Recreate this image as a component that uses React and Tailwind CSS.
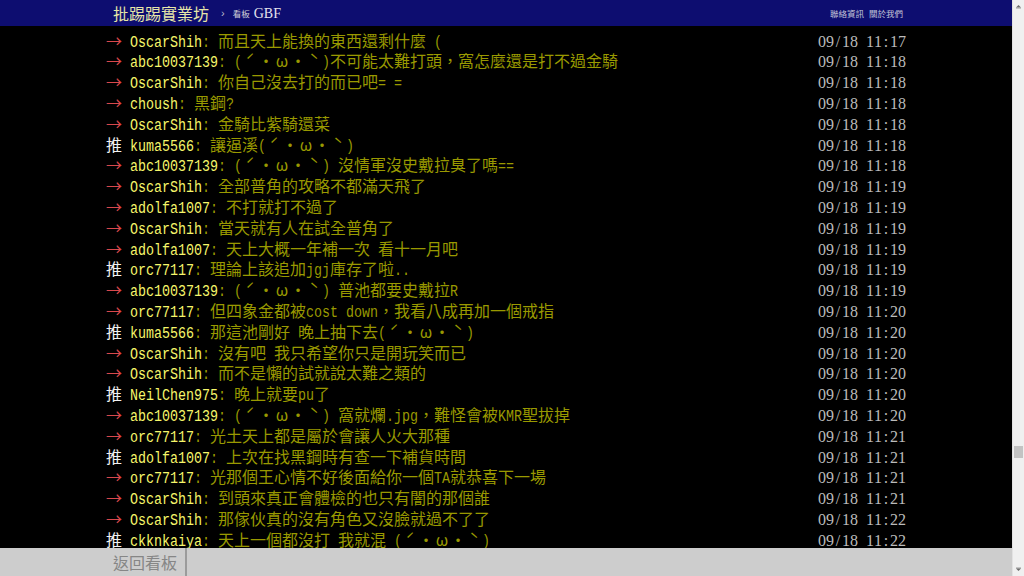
const CJK = "font-['Noto_Sans_CJK_TC','Noto_Sans_CJK_JP',sans-serif]";

const rows = [
  ["→", "OscarShih", "而且天上能換的東西還剩什麼 (", "09/18 11:17"],
  ["→", "abc10037139", "(ˊ・ω・ˋ)不可能太難打頭，窩怎麼還是打不過金騎", "09/18 11:18"],
  ["→", "OscarShih", "你自己沒去打的而已吧= =", "09/18 11:18"],
  ["→", "choush", "黑鋼?", "09/18 11:18"],
  ["→", "OscarShih", "金騎比紫騎還菜", "09/18 11:18"],
  ["推", "kuma5566", "讓逼溪(ˊ・ω・ˋ)", "09/18 11:18"],
  ["→", "abc10037139", "(ˊ・ω・ˋ) 沒情軍沒史戴拉臭了嗎==", "09/18 11:18"],
  ["→", "OscarShih", "全部普角的攻略不都滿天飛了", "09/18 11:19"],
  ["→", "adolfa1007", "不打就打不過了", "09/18 11:19"],
  ["→", "OscarShih", "當天就有人在試全普角了", "09/18 11:19"],
  ["→", "adolfa1007", "天上大概一年補一次 看十一月吧", "09/18 11:19"],
  ["推", "orc77117", "理論上該追加jgj庫存了啦..", "09/18 11:19"],
  ["→", "abc10037139", "(ˊ・ω・ˋ) 普池都要史戴拉R", "09/18 11:19"],
  ["→", "orc77117", "但四象金都被cost down，我看八成再加一個戒指", "09/18 11:20"],
  ["推", "kuma5566", "那這池剛好 晚上抽下去(ˊ・ω・ˋ)", "09/18 11:20"],
  ["→", "OscarShih", "沒有吧 我只希望你只是開玩笑而已", "09/18 11:20"],
  ["→", "OscarShih", "而不是懶的試就說太難之類的", "09/18 11:20"],
  ["推", "NeilChen975", "晚上就要pu了", "09/18 11:20"],
  ["→", "abc10037139", "(ˊ・ω・ˋ) 窩就爛.jpg，難怪會被KMR聖拔掉", "09/18 11:20"],
  ["→", "orc77117", "光土天上都是屬於會讓人火大那種", "09/18 11:21"],
  ["推", "adolfa1007", "上次在找黑鋼時有查一下補貨時間", "09/18 11:21"],
  ["→", "orc77117", "光那個王心情不好後面給你一個TA就恭喜下一場", "09/18 11:21"],
  ["→", "OscarShih", "到頭來真正會體檢的也只有闇的那個誰", "09/18 11:21"],
  ["→", "OscarShih", "那傢伙真的沒有角色又沒臉就過不了了", "09/18 11:22"],
  ["推", "ckknkaiya", "天上一個都沒打 我就混 (ˊ・ω・ˋ)", "09/18 11:22"],
];

// terminal-like cells: half-width ascii 8px, full-width 16px
function Cells({ text, className }) {
  const runs = text.match(/[\x20-\x7e]+|[^\x20-\x7e]/g) || [];
  return (
    <span className={"flex items-baseline " + className}>
      {runs.map((r, i) =>
        /[\x20-\x7e]/.test(r[0]) ? (
          <span key={i} className="inline-block overflow-visible" style={{ width: r.length * 8 }}>
            <span className="inline-block origin-left scale-x-[0.833] whitespace-pre font-['Liberation_Mono',monospace] text-[16px]">
              {r}
            </span>
          </span>
        ) : (
          <span key={i} className={"inline-block w-[16px] text-center text-[16px] " + CJK}>
            {r}
          </span>
        )
      )}
    </span>
  );
}

// date/time: serif digits, one 8px cell per char
function Stamp({ text }) {
  return (
    <span className="flex items-baseline font-['Liberation_Serif',serif] text-[16px] text-[#bbbbbb]">
      {text.split("").map((c, i) => (
        <span key={i} className="inline-block w-[8px] text-center whitespace-pre">
          {c}
        </span>
      ))}
    </span>
  );
}

function PushRow({ tag, user, content, time }) {
  return (
    <div className="flex h-[20.8px] items-baseline leading-[20.8px]">
      <Cells text={tag + " "} className={tag === "推" ? "text-[#f2f2f2]" : "text-[#d9484c]"} />
      <Cells text={user} className="text-[#f6f66a]" />
      <Cells text={": " + content} className="text-[#999900]" />
      <div className="ml-auto">
        <Stamp text={time} />
      </div>
    </div>
  );
}

function Scrollbar() {
  return (
    <div className="flex w-[12px] flex-col border-l border-[#e2e2e2] bg-[#f0f0f0]">
      <svg width="11" height="12" viewBox="0 0 11 12">
        <path d="M3 7.5 L5.5 5 L8 7.5 Z" fill="#6b6b6b" />
        <rect x="3" y="7.5" width="5" height="1" fill="#9a9a9a" />
      </svg>
      <div className="mx-[1px] mt-[434px] h-[12px] bg-[#c3c3c3]" />
      <div className="flex-1" />
      <svg width="11" height="12" viewBox="0 0 11 12">
        <rect x="3" y="3.5" width="5" height="1" fill="#9a9a9a" />
        <path d="M3 4.5 L5.5 7 L8 4.5 Z" fill="#6b6b6b" />
      </svg>
    </div>
  );
}

export default function App() {
  return (
    <div className="flex h-[576px] w-[1024px] overflow-hidden bg-black">
      <div className="flex flex-1 flex-col">
        {/* top bar */}
        <div className="flex h-[26px] items-center bg-[#0d0d70] pl-[113px] pr-[109px]">
          <span className={"text-[16px] leading-none text-[#e6e6a8] " + CJK}>批踢踢實業坊</span>
          <span className="ml-[12px] font-['Liberation_Sans',sans-serif] text-[11px] text-[#bbbbcc]">›</span>
          <span className={"ml-[8px] text-[8.5px] text-[#d0d0d8] " + CJK}>看板</span>
          <span className="ml-[4px] font-['Liberation_Serif',serif] text-[14px] text-[#e4e4ee]">GBF</span>
          <div className={"ml-auto flex gap-[5px] text-[8.5px] text-[#c4c4d8] " + CJK}>
            <span>聯絡資訊</span>
            <span>關於我們</span>
          </div>
        </div>

        {/* push list */}
        <div className="flex-1 overflow-hidden pt-[3.6px]">
          <div className="mx-auto w-[800px]">
            {rows.map(([tag, user, content, time], i) => (
              <PushRow key={i} tag={tag} user={user} content={content} time={time} />
            ))}
          </div>
        </div>

        {/* bottom navigation */}
        <div className="flex h-[28px] bg-[#cdcdcd]">
          <div className={"flex w-[187px] items-center border-r-[2px] border-[#9b9b9b] pl-[113px] text-[16px] text-[#868686] " + CJK}>
            返回看板
          </div>
        </div>
      </div>
      <Scrollbar />
    </div>
  );
}
